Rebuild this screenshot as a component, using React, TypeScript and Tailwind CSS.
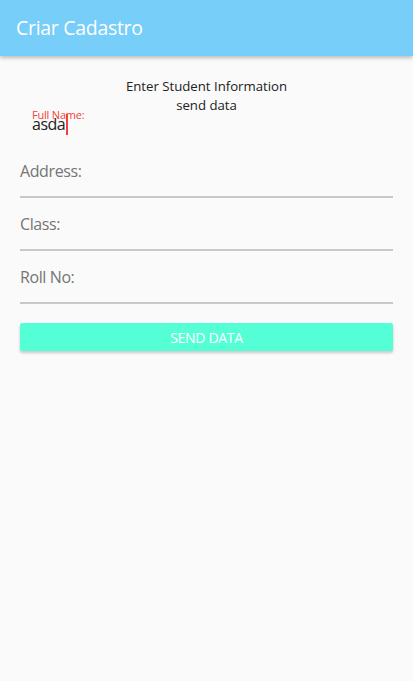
export default function App() {
    const fields = ["Address:", "Class:", "Roll No:"];
    return (
        <div
            className="min-h-[681px] bg-[#fafafa]"
            style={{ fontFamily: '"Open Sans", "Noto Sans", sans-serif' }}
        >
            <header className="h-[56px] bg-[#76cef9] flex items-center px-4 shadow-[0_2px_4px_rgba(0,0,0,0.25)]">
                <h1 className="text-white text-[19.5px] leading-none tracking-[-0.3px]">Criar Cadastro</h1>
            </header>

            <main className="px-5">
                <div className="pt-[21px] text-center text-[13.2px] leading-[19px] text-[#212121]">
                    <p>Enter Student Information</p>
                    <p>send data</p>
                </div>

                <div className="relative h-[36px] pl-3 -mt-[6px]">
                    <span className="absolute left-3 top-0 text-[11px] leading-none tracking-[-0.2px] text-[#f44336]">Full Name:</span>
                    <div className="pt-[4px] flex items-center text-[16px] leading-[22px] tracking-[-0.5px] text-[#212121]">
                        asda
                        <span className="w-[2px] h-[21px] bg-[#f44336] ml-[1px]" />
                    </div>
                </div>

                {fields.map((f) => (
                    <div key={f} className="pt-[15px]">
                        <div className="text-[16px] leading-[22px] tracking-[-0.4px] text-[#757575] pb-[14px]">{f}</div>
                        <div className="h-[2px] bg-[#c8c8c8]" />
                    </div>
                ))}

                <button className="mt-[19px] w-full h-[28px] rounded-[2px] bg-[#55ffd6] text-white text-[14px] tracking-[-0.3px] shadow-[0_2px_3px_rgba(0,0,0,0.2)]">
                    SEND DATA
                </button>
            </main>
        </div>
    );
}
